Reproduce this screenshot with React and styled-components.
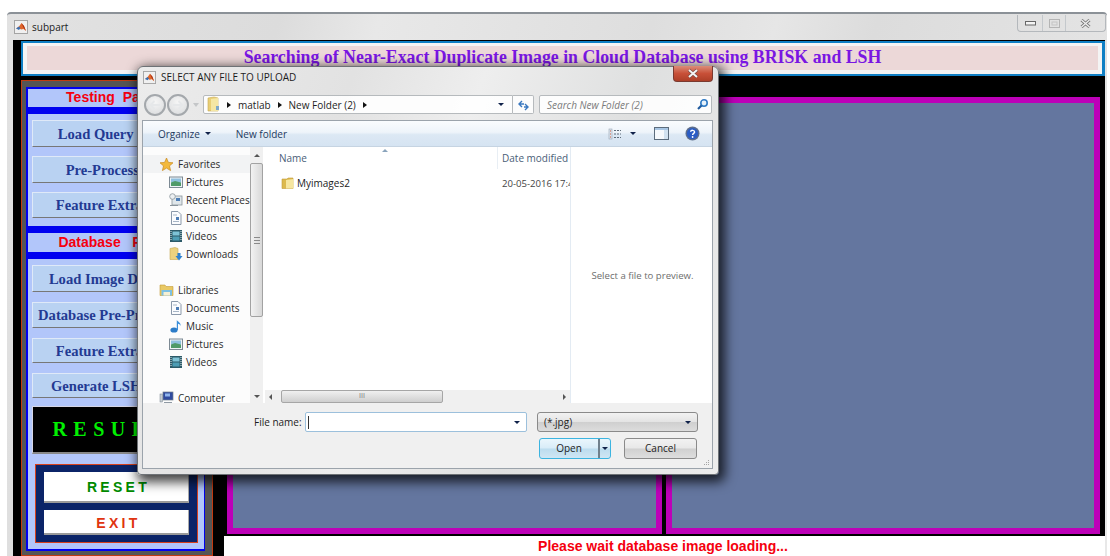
import React from 'react';
import styled, { createGlobalStyle } from 'styled-components';

const GlobalStyle = createGlobalStyle`
  html, body {
    margin: 0;
    padding: 0;
    background: #fff;
    overflow: hidden;
  }
  * { box-sizing: border-box; }
`;

const UI_FONT = '"Open Sans", "Noto Sans", sans-serif';
const SERIF = '"Liberation Serif", serif';
const ARIAL = '"Liberation Sans", sans-serif';

/* ---------- small drawn icons ---------- */

const MatlabIcon = ({ size = 14 }) => (
  <svg width={size} height={size} viewBox="0 0 14 14">
    <rect x="0.5" y="0.5" width="13" height="13" fill="#f0f0f0" stroke="#a4a4a4" />
    <path d="M2 8.5 L5 6.5 L7.5 3 L10 6 L12 11 L9.5 9 L7 9.5 L5 8 Z" fill="#e0662a" />
    <path d="M2 8.5 L5 6.5 L6.5 8 L5 10 Z" fill="#3d6fb0" />
    <path d="M7.5 3 L10 6 L12 11 L9.5 7.5 Z" fill="#a52a10" />
  </svg>
);

const Folder = ({ w = 14, h = 14 }) => (
  <svg width={w} height={h} viewBox="0 0 14 14">
    <path d="M1 3 L1 12.5 L12 12.5 L12 2 L7 2 L6 3 Z" fill="#dcb94e" stroke="#c49a3a" strokeWidth="0.6" />
    <path d="M5 4 L12.5 3 L12.5 12.5 L5 12.5 Z" fill="#f6e6a0" />
  </svg>
);

const TallFolder = () => (
  <svg width="13" height="17" viewBox="0 0 13 17">
    <path d="M1 2 L7 1 L11 2 L11 15 L1 15 Z" fill="#e9cf76" stroke="#c8a850" strokeWidth="0.6" />
    <path d="M4 3 L11 2 L11 15 L4 15 Z" fill="#f5e7a4" />
    <rect x="9" y="10" width="3" height="4" fill="#7fa9c9" />
  </svg>
);

const Star = () => (
  <svg width="15" height="15" viewBox="0 0 15 15">
    <path d="M7.5 1 L9.4 5.4 L14 5.8 L10.5 8.9 L11.6 13.6 L7.5 11.1 L3.4 13.6 L4.5 8.9 L1 5.8 L5.6 5.4 Z" fill="#f3b93c" stroke="#c98a1e" strokeWidth="0.7" />
  </svg>
);

const PictureIcon = () => (
  <svg width="14" height="14" viewBox="0 0 14 14">
    <rect x="0.5" y="2" width="13" height="10.5" fill="#eef3f6" stroke="#7d8a94" />
    <rect x="2" y="3.5" width="10" height="4" fill="#8fc0de" />
    <path d="M2 7.5 L6 6 L12 7.5 L12 11 L2 11 Z" fill="#4f9a68" />
  </svg>
);

const RecentIcon = () => (
  <svg width="14" height="14" viewBox="0 0 14 14">
    <rect x="3" y="3" width="10" height="9" fill="#dfe6ea" stroke="#8a949b" strokeWidth="0.8" />
    <rect x="7" y="5" width="4" height="3" fill="#4d7db5" />
    <circle cx="3.5" cy="3.5" r="2.8" fill="#eceff1" stroke="#8a949b" strokeWidth="0.8" />
    <path d="M1 12.5 L9 12.5" stroke="#8a949b" />
  </svg>
);

const DocIcon = () => (
  <svg width="14" height="14" viewBox="0 0 14 14">
    <path d="M2.5 0.5 L9 0.5 L12 3.5 L12 13.5 L2.5 13.5 Z" fill="#fbfcfe" stroke="#8b99aa" />
    <path d="M4 4 L8 4 M4 10.5 L10 10.5" stroke="#a8b6c6" />
    <rect x="7" y="6" width="3" height="3" fill="#4d7db5" />
  </svg>
);

const FilmIcon = () => (
  <svg width="14" height="14" viewBox="0 0 14 14">
    <rect x="1" y="1" width="12" height="12" fill="#2c5a68" />
    <rect x="3.5" y="2.5" width="7" height="4" fill="#7ec3d6" />
    <rect x="3.5" y="7.5" width="7" height="4" fill="#4d9db4" />
    <path d="M2 2 L2 12 M12 2 L12 12" stroke="#e6eef0" strokeWidth="1" strokeDasharray="1 1" />
  </svg>
);

const DownloadIcon = () => (
  <svg width="14" height="14" viewBox="0 0 14 14">
    <path d="M1 1.5 L6 0.5 L9 1.5 L9 12.5 L1 12.5 Z" fill="#ecd27e" stroke="#c8a850" strokeWidth="0.6" />
    <path d="M8.5 6 L11.5 6 L11.5 9 L13.5 9 L10 13.5 L6.5 9 L8.5 9 Z" fill="#2f82d0" />
  </svg>
);

const LibraryIcon = () => (
  <svg width="15" height="14" viewBox="0 0 15 14">
    <path d="M1 2 L1 12.5 L14 12.5 L14 3.5 L7 3.5 L6 2 Z" fill="#e9c964" stroke="#c49a3a" strokeWidth="0.6" />
    <path d="M2.5 7 L13 7 L13 12.5 L2.5 12.5 Z" fill="#7cc0e4" />
    <path d="M4.5 9 L11 9 L11 12.5 L4.5 12.5 Z" fill="#f6f0d4" />
  </svg>
);

const MusicIcon = () => (
  <svg width="14" height="14" viewBox="0 0 14 14">
    <ellipse cx="5" cy="11" rx="3.6" ry="2.6" fill="#2c7cc8" />
    <path d="M7.8 11 L7.8 1 C9 3 12 3.5 11.5 7 C11 5.5 10 5 9 4.8 L9 11 Z" fill="#3a8fdb" />
  </svg>
);

const ComputerIcon = () => (
  <svg width="15" height="14" viewBox="0 0 15 14">
    <rect x="4" y="1" width="10" height="8" fill="#2f4a9e" stroke="#74808c" strokeWidth="0.7" />
    <rect x="6" y="2.5" width="5" height="3" fill="#8fb4ec" />
    <rect x="1" y="3" width="2.4" height="8" fill="#c5ccd2" stroke="#74808c" strokeWidth="0.5" />
    <path d="M5 12 L13 12" stroke="#74808c" strokeWidth="1.6" />
  </svg>
);

const NavArrow = ({ flip }) => (
  <svg width="12" height="10" viewBox="0 0 12 10" style={flip ? { transform: 'scaleX(-1)' } : undefined}>
    <path d="M5.5 1 L1.5 5 L5.5 9 M2 5 L11 5" stroke="#e6e8ea" strokeWidth="2" fill="none" />
  </svg>
);

const Caret = styled.span`
  display: inline-block;
  flex: none;
  width: 0;
  height: 0;
  border-left: ${(p) => p.$size || 4}px solid transparent;
  border-right: ${(p) => p.$size || 4}px solid transparent;
  border-top: ${(p) => p.$size || 4}px solid ${(p) => p.$color || '#10224a'};
`;

const Crumb = styled.span`
  flex: none;
  width: 0;
  height: 0;
  border-top: 3.5px solid transparent;
  border-bottom: 3.5px solid transparent;
  border-left: 4px solid #111;
`;

/* ---------- figure window behind the dialog ---------- */

const Page = styled.div`
  position: relative;
  width: 1110px;
  height: 556px;
  overflow: hidden;
  background: #fff;
  padding: 12px 3px 0 7px;
`;

const Figure = styled.div`
  width: 100%;
  height: 544px;
  display: flex;
  flex-direction: column;
  border-top: 2px solid #8b9197;
  border-radius: 4px 4px 0 0;
  background: linear-gradient(105deg, #e2e2e2 0%, #dcdcdc 22%, #e8e8e8 30%, #dedede 52%, #e6e6e6 62%, #dcdcdc 70%, #e8e8e8 100%);
  padding: 0 2px 0 6px;
`;

const FigureBar = styled.div`
  height: 26px;
  flex: none;
  display: flex;
  align-items: center;
  justify-content: space-between;
  color: #222;
  font: 10px ${UI_FONT};
`;

const FigureTitle = styled.div`
  display: flex;
  align-items: center;
  gap: 4px;
  padding-left: 1px;
`;

const Controls = styled.div`
  display: flex;
  align-self: flex-start;
  margin-top: 1px;
  height: 17px;
  border: 1px solid #b4b8bc;
  border-top: none;
  border-radius: 0 0 4px 4px;
  margin-right: -1px;
`;

const ControlCell = styled.div`
  width: ${(p) => p.$w}px;
  display: flex;
  align-items: center;
  justify-content: center;
  color: #8a8f94;
  border-left: ${(p) => (p.$first ? 'none' : '1px solid #c4c8cc')};
`;

const Client = styled.div`
  flex: 1;
  min-height: 0;
  background: #000;
  padding: 1px 0 0 8px;
  overflow: hidden;
`;

const Banner = styled.div`
  height: 35px;
  border: 2px solid #0f7fc4;
  border-right-width: 3px;
  background: #f4f4f4;
  padding: 3px 4px 4px 4px;
`;

const BannerText = styled.div`
  height: 100%;
  background: #ecd8d8;
  color: #7a16e2;
  font: bold 17.8px/22px ${SERIF};
  text-align: center;
`;

const Body = styled.div`
  display: grid;
  grid-template-columns: 192px 1fr;
  column-gap: 11px;
  margin-top: 4px;
`;

/* ---------- left control column ---------- */

const ControlPanel = styled.div`
  height: 476px;
  background: #555;
  border: 1px solid #c23a10;
  padding: 6px 7px 4px 4px;
`;

const ControlInner = styled.div`
  height: 100%;
  background: #b2c6fa;
  border: 2px solid #0000f0;
  border-right-width: 1px;
  display: flex;
  flex-direction: column;
`;

const SectionHead = styled.div`
  height: ${(p) => p.$h}px;
  flex: none;
  padding-right: ${(p) => p.$shift || 0}px;
  text-align: center;
  color: #f5000f;
  font: bold 14px/${(p) => p.$lh}px ${ARIAL};
  white-space: pre;
`;

const BlueRule = styled.div`
  height: 7px;
  flex: none;
  background: #0000f0;
  margin-top: ${(p) => p.$mt || 0}px;
`;

const ButtonStack = styled.div`
  display: flex;
  flex-direction: column;
  padding: 6px 0 0 4px;
  gap: 9px;
`;

const ActionButton = styled.button`
  display: block;
  height: ${(p) => p.$h || 27}px;
  width: 166px;
  flex: none;
  margin: ${(p) => p.$mt || 0}px 0 0;
  padding: 0 ${(p) => p.$right || 0}px 0 ${(p) => p.$left || 0}px;
  background: #b9d2f2;
  border: none;
  border-top: 1px solid #dfe9f8;
  border-left: 1px solid #dfe9f8;
  border-bottom: 1px solid #777;
  border-right: 1px solid #777;
  color: #233a92;
  font: bold 14.6px/22px ${SERIF};
  white-space: nowrap;
  text-align: center;
`;

const ResultBox = styled.div`
  width: 166px;
  height: 48px;
  margin: 8px 0 0 4px;
  flex: none;
  padding-right: 7px;
  background: #000;
  border: 1px solid #d6d6e6;
  border-bottom: 2px solid #888;
  border-right: 2px solid #888;
  color: #00f000;
  font: bold 20px/45px ${SERIF};
  letter-spacing: 6.5px;
  text-align: center;
  white-space: nowrap;
`;

const ActionFrame = styled.div`
  width: 163px;
  height: 79px;
  margin: 10px 0 0 7px;
  flex: none;
  background: #0b2468;
  border: 1px solid #d8401c;
  padding: 7px 8px;
  display: flex;
  flex-direction: column;
  gap: 7px;
`;

const FrameButton = styled.div`
  height: ${(p) => p.$h}px;
  flex: none;
  padding-left: 5px;
  background: #fff;
  border-bottom: 2px solid #9a9a9a;
  border-right: 1px solid #aaa;
  color: ${(p) => p.$color};
  font: bold 14px/${(p) => p.$lh}px ${ARIAL};
  letter-spacing: 3.3px;
  text-align: center;
`;

/* ---------- axes and status line ---------- */

const RightColumn = styled.div`
  padding-top: 17px;
  display: flex;
  flex-direction: column;
`;

const AxesRow = styled.div`
  display: grid;
  grid-template-columns: 435px 434px;
  column-gap: 4px;
  padding-left: 3px;
  height: 437px;
`;

const Axes = styled.div`
  background: #64769f;
  border: 6px solid #bd00b8;
  height: 437px;
`;

const StatusLine = styled.div`
  margin-top: 2px;
  height: 22px;
  padding-right: 3px;
  background: #fff;
  color: #f5000f;
  font: bold 14px/20px ${ARIAL};
  text-align: center;
`;

/* ---------- file dialog on top ---------- */

const Dialog = styled.div`
  position: absolute;
  left: 137px;
  top: 66px;
  width: 582px;
  height: 409px;
  border-radius: 6px 6px 4px 4px;
  border: 1px solid #6e7276;
  background: linear-gradient(110deg, #ececec 0%, #e2e2e2 30%, #eeeeee 48%, #dfe0e0 70%, #ececec 100%);
  box-shadow: 3px 4px 12px 3px rgba(0, 0, 0, 0.75);
  padding: 0 5px 5px 4px;
  display: flex;
  flex-direction: column;
  font: 10px ${UI_FONT};
  color: #2c2c2c;
`;

const DialogTitle = styled.div`
  height: 26px;
  flex: none;
  display: flex;
  align-items: center;
  gap: 5px;
  padding: 0 0 6px 1px;
  color: #1c1c1c;
`;

const CloseBox = styled.div`
  position: absolute;
  top: -1px;
  right: 5px;
  width: 40px;
  height: 16px;
  border: 1px solid #7a3a30;
  border-top: none;
  border-radius: 0 0 4px 4px;
  background: linear-gradient(#dc8c78 0%, #c85038 50%, #ad3f28 100%);
  display: flex;
  align-items: center;
  justify-content: center;
`;

const AddressRow = styled.div`
  height: 21px;
  flex: none;
  margin-top: 1px;
  padding-left: 2px;
  display: flex;
  align-items: center;
`;

const NavCircle = styled.div`
  width: 22px;
  height: 22px;
  margin-right: 1px;
  flex: none;
  border-radius: 50%;
  border: 2px solid #a4a8ac;
  background: radial-gradient(circle at 50% 35%, #f6f6f6, #d8dadc);
  display: flex;
  align-items: center;
  justify-content: center;
`;

const HistoryDrop = styled.span`
  flex: none;
  margin-left: 3px;
  width: 0;
  height: 0;
  border-left: 3px solid transparent;
  border-right: 3px solid transparent;
  border-top: 4px solid #c4c6c8;
`;

const AddressBox = styled.div`
  width: 310px;
  height: 19px;
  margin-left: 4px;
  flex: none;
  background: rgba(255, 255, 255, 0.9);
  border: 1px solid #b6babd;
  border-radius: 2px 0 0 2px;
  display: flex;
  align-items: center;
  gap: 7px;
  padding: 0 8px 0 3px;
  color: #1e1e1e;
  white-space: nowrap;
`;

const RefreshBox = styled.div`
  width: 21px;
  height: 19px;
  flex: none;
  background: rgba(255, 255, 255, 0.85);
  border: 1px solid #b6babd;
  border-left: none;
  border-radius: 0 2px 2px 0;
  display: flex;
  align-items: center;
  justify-content: center;
`;

const SearchBox = styled.div`
  width: 173px;
  height: 19px;
  margin-left: 5px;
  flex: none;
  background: rgba(255, 255, 255, 0.9);
  border: 1px solid #b6babd;
  border-radius: 2px;
  display: flex;
  align-items: center;
  justify-content: space-between;
  padding: 0 2px 0 7px;
  color: #7b7b7b;
  font-style: italic;
`;

const Pane = styled.div`
  flex: 1;
  min-height: 0;
  margin-top: 5px;
  border: 1px solid #9ba3ab;
  display: flex;
  flex-direction: column;
  background: #f0f0f0;
`;

const Toolbar = styled.div`
  height: 26px;
  flex: none;
  display: flex;
  align-items: center;
  padding: 0 12px 0 15px;
  background: linear-gradient(#fafcfe 0%, #eef4fa 45%, #dce8f4 55%, #d6e4f2 100%);
  border-bottom: 1px solid #c6d4e2;
  color: #1e3a60;
`;

const ToolLabel = styled.span`
  display: inline-flex;
  align-items: center;
  gap: 5px;
  margin: 0 ${(p) => p.$mr || 0}px 0 ${(p) => p.$ml || 0}px;
`;

const ToolSpacer = styled.div`
  flex: 1;
`;

const HelpIcon = styled.svg`
  margin-left: 16px;
`;

const Browser = styled.div`
  height: 256px;
  flex: none;
  display: flex;
  background: #fff;
  overflow: hidden;
`;

const NavColumn = styled.div`
  width: 107px;
  flex: none;
  padding-top: 8px;
  background: #fcfcfc;
  overflow: hidden;
`;

const NavRow = styled.div`
  height: 18px;
  display: flex;
  align-items: center;
  gap: ${(p) => (p.$head ? 4 : 3)}px;
  padding-left: ${(p) => (p.$head ? 16 : 26)}px;
  margin-bottom: ${(p) => p.$mb || 0}px;
  white-space: nowrap;
  color: #2a2a2a;
  background: ${(p) => (p.$shaded ? '#f2f3f4' : 'transparent')};

  svg {
    flex: none;
  }
`;

const VScroll = styled.div`
  width: 13px;
  flex: none;
  position: relative;
  background: #f0f0f0;
  display: flex;
  flex-direction: column;
  align-items: center;
`;

const ScrollUp = styled(Caret)`
  transform: rotate(180deg);
  margin-top: 7px;
`;

const ScrollDown = styled(Caret)`
  margin-top: auto;
  margin-bottom: 5px;
`;

const ScrollThumb = styled.div`
  position: absolute;
  left: 0;
  right: 0;
  top: 16px;
  height: 154px;
  background: linear-gradient(90deg, #f2f2f2, #d8d8d8);
  border: 1px solid #a2a2a2;
  border-radius: 2px;
  display: flex;
  align-items: center;
  justify-content: center;
`;

const ThumbGrip = styled.div`
  width: 6px;
  height: 7px;
  background: repeating-linear-gradient(#8a8a8a 0 1px, transparent 1px 3px);
`;

const Files = styled.div`
  width: 308px;
  flex: none;
  display: flex;
  flex-direction: column;
  border-right: 1px solid #e3ebf3;
`;

const ColumnHead = styled.div`
  height: 22px;
  flex: none;
  position: relative;
  display: grid;
  grid-template-columns: 234px 1fr;
  align-items: center;
  color: #4a6078;
  white-space: nowrap;
`;

const HeadCell = styled.div`
  height: 100%;
  display: flex;
  align-items: center;
  padding-left: ${(p) => p.$pl}px;
  border-left: ${(p) => (p.$line ? '1px solid #e8eef4' : 'none')};
`;

const SortMark = styled.span`
  position: absolute;
  left: 119px;
  top: 2px;
  width: 0;
  height: 0;
  border-left: 3px solid transparent;
  border-right: 3px solid transparent;
  border-bottom: 3px solid #8aa4bc;
`;

const FileRow = styled.div`
  height: 18px;
  margin-top: 5px;
  display: grid;
  grid-template-columns: 234px 1fr;
  align-items: center;
  overflow: hidden;
  color: #222;
  white-space: nowrap;
`;

const FileName = styled.div`
  display: flex;
  align-items: center;
  gap: 2px;
  padding-left: 18px;
`;

const FileDate = styled.div`
  padding-left: 5px;
  overflow: hidden;
  color: #444;
  font-size: 9.6px;
`;

const FileSpace = styled.div`
  flex: 1;
`;

const HScroll = styled.div`
  height: 13px;
  flex: none;
  margin-left: 2px;
  background: #f0f0f0;
  display: flex;
  align-items: center;
  padding: 0 4px;
`;

const HThumb = styled.div`
  width: 162px;
  height: 13px;
  margin-left: 9px;
  background: linear-gradient(#f0f0f0, #cfcfcf);
  border: 1px solid #a6a6a6;
  border-radius: 2px;
  color: #777;
  font-size: 7px;
  line-height: 10px;
  text-align: center;
`;

const ArrowLeft = styled.span`
  flex: none;
  width: 0;
  height: 0;
  border-top: 3px solid transparent;
  border-bottom: 3px solid transparent;
  border-right: 3px solid #555;
`;

const ArrowRight = styled(ArrowLeft)`
  border-right: none;
  border-left: 3px solid #555;
  margin-left: auto;
`;

const Preview = styled.div`
  flex: 1;
  display: flex;
  align-items: center;
  justify-content: center;
  padding-left: 2px;
  color: #6e6e6e;
  font-size: 9.6px;
`;

const Footer = styled.div`
  flex: 1;
  min-height: 0;
  position: relative;
  background: #f0f0f0;
  padding: 9px 15px 0 111px;
  display: flex;
  flex-direction: column;
  gap: 6px;
`;

const FooterRow = styled.div`
  display: flex;
  align-items: center;
  height: 20px;
  justify-content: ${(p) => (p.$end ? 'flex-end' : 'flex-start')};
`;

const FieldLabel = styled.label`
  width: 51px;
  flex: none;
  color: #1c1c1c;
`;

const NameInput = styled.div`
  width: 222px;
  height: 20px;
  flex: none;
  background: #fff;
  border: 1px solid #9cc0dc;
  border-radius: 2px;
  display: flex;
  align-items: center;
  justify-content: space-between;
  padding: 0 6px 0 2px;
`;

const TextCursor = styled.span`
  width: 1px;
  height: 13px;
  background: #333;
`;

const Combo = styled.div`
  width: 161px;
  height: 20px;
  margin-left: 10px;
  flex: none;
  background: linear-gradient(#f2f2f2, #e4e4e4 48%, #cfcfcf 52%, #dcdcdc);
  border: 1px solid #8a8a8a;
  border-radius: 3px;
  display: flex;
  align-items: center;
  justify-content: space-between;
  padding: 0 6px;
  color: #222;
`;

const DialogButton = styled.div`
  width: ${(p) => p.$w}px;
  height: 21px;
  flex: none;
  border: 1px solid ${(p) => (p.$primary ? '#3cb4e0' : '#8a8a8a')};
  border-radius: 3px;
  background: ${(p) =>
    p.$primary
      ? 'linear-gradient(#eaf6fc, #d8ecf8 48%, #bcdcee 52%, #cfe6f4)'
      : 'linear-gradient(#f2f2f2, #e8e8e8 48%, #d0d0d0 52%, #dedede)'};
  margin-left: ${(p) => p.$ml || 0}px;
  display: flex;
  align-items: center;
  justify-content: center;
  color: #1c1c1c;
`;

const OpenLabel = styled.span`
  flex: 1;
  height: 100%;
  line-height: 19px;
  text-align: center;
  border-right: 2px solid #70808c;
`;

const OpenArrow = styled.span`
  width: 10px;
  display: flex;
  justify-content: center;
`;

const Grip = styled.svg`
  position: absolute;
  right: 2px;
  bottom: 1px;
`;

const favourites = [
  ['Pictures', <PictureIcon />],
  ['Recent Places', <RecentIcon />],
  ['Documents', <DocIcon />],
  ['Videos', <FilmIcon />],
];

const libraries = [
  ['Documents', <DocIcon />],
  ['Music', <MusicIcon />],
  ['Pictures', <PictureIcon />],
  ['Videos', <FilmIcon />],
];

const FileDialog = () => (
  <Dialog>
    <CloseBox>
      <svg width="14" height="11" viewBox="0 0 14 11">
        <path d="M3 2 L11 9 M11 2 L3 9" stroke="#7a4a44" strokeWidth="3.4" />
        <path d="M3 2 L11 9 M11 2 L3 9" stroke="#f4f4f4" strokeWidth="2" />
      </svg>
    </CloseBox>
    <DialogTitle>
      <MatlabIcon size={13} />
      SELECT ANY FILE TO UPLOAD
    </DialogTitle>
    <AddressRow>
      <NavCircle><NavArrow /></NavCircle>
      <NavCircle><NavArrow flip /></NavCircle>
      <HistoryDrop />
      <AddressBox>
        <TallFolder />
        <Crumb />
        <span>matlab</span>
        <Crumb />
        <span>New Folder (2)</span>
        <Crumb />
        <ToolSpacer />
        <Caret $size={3.5} />
      </AddressBox>
      <RefreshBox>
        <svg width="13" height="12" viewBox="0 0 13 12">
          <path d="M5 2 L2 5 L5 8 M2 5 L7 5" stroke="#3a78c0" strokeWidth="1.4" fill="none" />
          <path d="M8 11 L11 8 L8 5 M11 8 L7 8" stroke="#3a78c0" strokeWidth="1.4" fill="none" />
        </svg>
      </RefreshBox>
      <SearchBox>
        Search New Folder (2)
        <svg width="13" height="13" viewBox="0 0 13 13">
          <circle cx="8" cy="5" r="3.2" stroke="#2f7ac4" strokeWidth="1.6" fill="#e6f2fb" />
          <path d="M5.5 7.5 L2 11" stroke="#1f5a9e" strokeWidth="2.2" />
        </svg>
      </SearchBox>
    </AddressRow>
    <Pane>
      <Toolbar>
        <ToolLabel $mr={25}>Organize <Caret $size={3} /></ToolLabel>
        <ToolLabel>New folder</ToolLabel>
        <ToolSpacer />
        <svg width="14" height="12" viewBox="0 0 14 12">
          <rect x="1" y="1" width="3" height="10" fill="#dde6ef" stroke="#98a6b4" strokeWidth="0.6" />
          <path d="M2 3 h1 M2 6 h1 M2 9 h1" stroke="#d05a3a" />
          <path d="M6 2.5 h7 M6 6 h7 M6 9.5 h7" stroke="#5e6c7a" strokeDasharray="2 1" />
        </svg>
        <ToolLabel $ml={8} $mr={18}><Caret $size={3.5} /></ToolLabel>
        <svg width="15" height="13" viewBox="0 0 15 13">
          <rect x="0.5" y="0.5" width="14" height="12" fill="#f6f9fc" stroke="#5c6c7c" />
          <rect x="1" y="1" width="13" height="2" fill="#a8c6e4" />
          <rect x="10" y="3" width="4" height="9" fill="#d2e2f0" />
        </svg>
        <HelpIcon width="15" height="15" viewBox="0 0 15 15">
          <circle cx="7.5" cy="7.5" r="7" fill="#5d6e8c" />
          <circle cx="7.5" cy="7.5" r="5.6" fill="#2a5cc4" />
          <path d="M5.6 5.8 C5.8 3.8 9.6 3.8 9.6 6 C9.6 7.4 7.6 7.4 7.6 9" stroke="#fff" strokeWidth="1.4" fill="none" />
          <circle cx="7.6" cy="11" r="0.9" fill="#fff" />
        </HelpIcon>
      </Toolbar>
      <Browser>
        <NavColumn>
          <NavRow $head $shaded><Star />Favorites</NavRow>
          {favourites.map(([label, icon]) => (
            <NavRow key={label}>{icon}{label}</NavRow>
          ))}
          <NavRow $mb={18}><DownloadIcon />Downloads</NavRow>
          <NavRow $head><LibraryIcon />Libraries</NavRow>
          {libraries.map(([label, icon], i) => (
            <NavRow key={label} $mb={i === libraries.length - 1 ? 18 : 0}>{icon}{label}</NavRow>
          ))}
          <NavRow $head><ComputerIcon />Computer</NavRow>
        </NavColumn>
        <VScroll>
          <ScrollUp $size={3} $color="#555" />
          <ScrollThumb><ThumbGrip /></ScrollThumb>
          <ScrollDown $size={3} $color="#555" />
        </VScroll>
        <Files>
          <ColumnHead>
            <SortMark />
            <HeadCell $pl={16}>Name</HeadCell>
            <HeadCell $pl={4} $line>Date modified</HeadCell>
          </ColumnHead>
          <FileRow>
            <FileName><Folder />Myimages2</FileName>
            <FileDate>20-05-2016 17:45</FileDate>
          </FileRow>
          <FileSpace />
          <HScroll>
            <ArrowLeft />
            <HThumb>III</HThumb>
            <ArrowRight />
          </HScroll>
        </Files>
        <Preview>Select a file to preview.</Preview>
      </Browser>
      <Footer>
        <FooterRow>
          <FieldLabel>File name:</FieldLabel>
          <NameInput>
            <TextCursor />
            <Caret $size={3.5} />
          </NameInput>
          <Combo>
            (*.jpg)
            <Caret $size={3.5} />
          </Combo>
        </FooterRow>
        <FooterRow $end>
          <DialogButton $w={72} $primary>
            <OpenLabel>Open</OpenLabel>
            <OpenArrow><Caret $size={3.5} /></OpenArrow>
          </DialogButton>
          <DialogButton $w={73} $ml={13}>Cancel</DialogButton>
        </FooterRow>
        <Grip width="8" height="8" viewBox="0 0 8 8">
          <path d="M6 1 h1 v1 h-1 Z M4 3 h1 v1 h-1 Z M6 3 h1 v1 h-1 Z M2 5 h1 v1 h-1 Z M4 5 h1 v1 h-1 Z M6 5 h1 v1 h-1 Z" fill="#a4a4a4" />
        </Grip>
      </Footer>
    </Pane>
  </Dialog>
);

const App = () => (
  <>
    <GlobalStyle />
    <Page>
      <Figure>
        <FigureBar>
          <FigureTitle>
            <MatlabIcon />
            subpart
          </FigureTitle>
          <Controls>
            <ControlCell $w={24} $first>
              <svg width="11" height="6" viewBox="0 0 11 6"><rect x="0.5" y="1.5" width="10" height="3.5" fill="#f4f4f4" stroke="#666" /></svg>
            </ControlCell>
            <ControlCell $w={23}>
              <svg width="11" height="9" viewBox="0 0 11 9"><rect x="0.5" y="0.5" width="10" height="8" fill="none" stroke="#b4b4b4" /><rect x="3" y="3" width="5" height="3" fill="none" stroke="#c4c4c4" /></svg>
            </ControlCell>
            <ControlCell $w={40}>
              <svg width="11" height="9" viewBox="0 0 11 9">
                <path d="M1.5 1 L9.5 8 M9.5 1 L1.5 8" stroke="#777" strokeWidth="3" />
                <path d="M1.5 1 L9.5 8 M9.5 1 L1.5 8" stroke="#eee" strokeWidth="1.4" />
              </svg>
            </ControlCell>
          </Controls>
        </FigureBar>
        <Client>
          <Banner>
            <BannerText>Searching of Near-Exact Duplicate Image in Cloud Database using BRISK and LSH</BannerText>
          </Banner>
          <Body>
            <ControlPanel>
              <ControlInner>
                <SectionHead $h={18} $lh={16} $shift={16}>{'Testing  Part'}</SectionHead>
                <BlueRule />
                <ButtonStack>
                  <ActionButton $left={4}>Load Query Image</ActionButton>
                  <ActionButton $right={6}>Pre-Processing</ActionButton>
                  <ActionButton $h={26}>Feature Extraction</ActionButton>
                </ButtonStack>
                <BlueRule $mt={8} />
                <SectionHead $h={19} $lh={19} $shift={14}>{'Database   Part'}</SectionHead>
                <BlueRule />
                <ButtonStack>
                  <ActionButton $left={4}>Load Image Database</ActionButton>
                  <ActionButton $h={26} $mt={1}>Database Pre-Processing</ActionButton>
                  <ActionButton $h={25} $mt={1}>Feature Extraction</ActionButton>
                  <ActionButton $h={25} $mt={1}>Generate LSH Table</ActionButton>
                </ButtonStack>
                <ResultBox>RESULT</ResultBox>
                <ActionFrame>
                  <FrameButton $h={31} $lh={31} $color="#008a00">RESET</FrameButton>
                  <FrameButton $h={25} $lh={26} $color="#e03410">EXIT</FrameButton>
                </ActionFrame>
              </ControlInner>
            </ControlPanel>
            <RightColumn>
              <AxesRow>
                <Axes />
                <Axes />
              </AxesRow>
              <StatusLine>Please wait database image loading...</StatusLine>
            </RightColumn>
          </Body>
        </Client>
      </Figure>
      <FileDialog />
    </Page>
  </>
);

export default App;
